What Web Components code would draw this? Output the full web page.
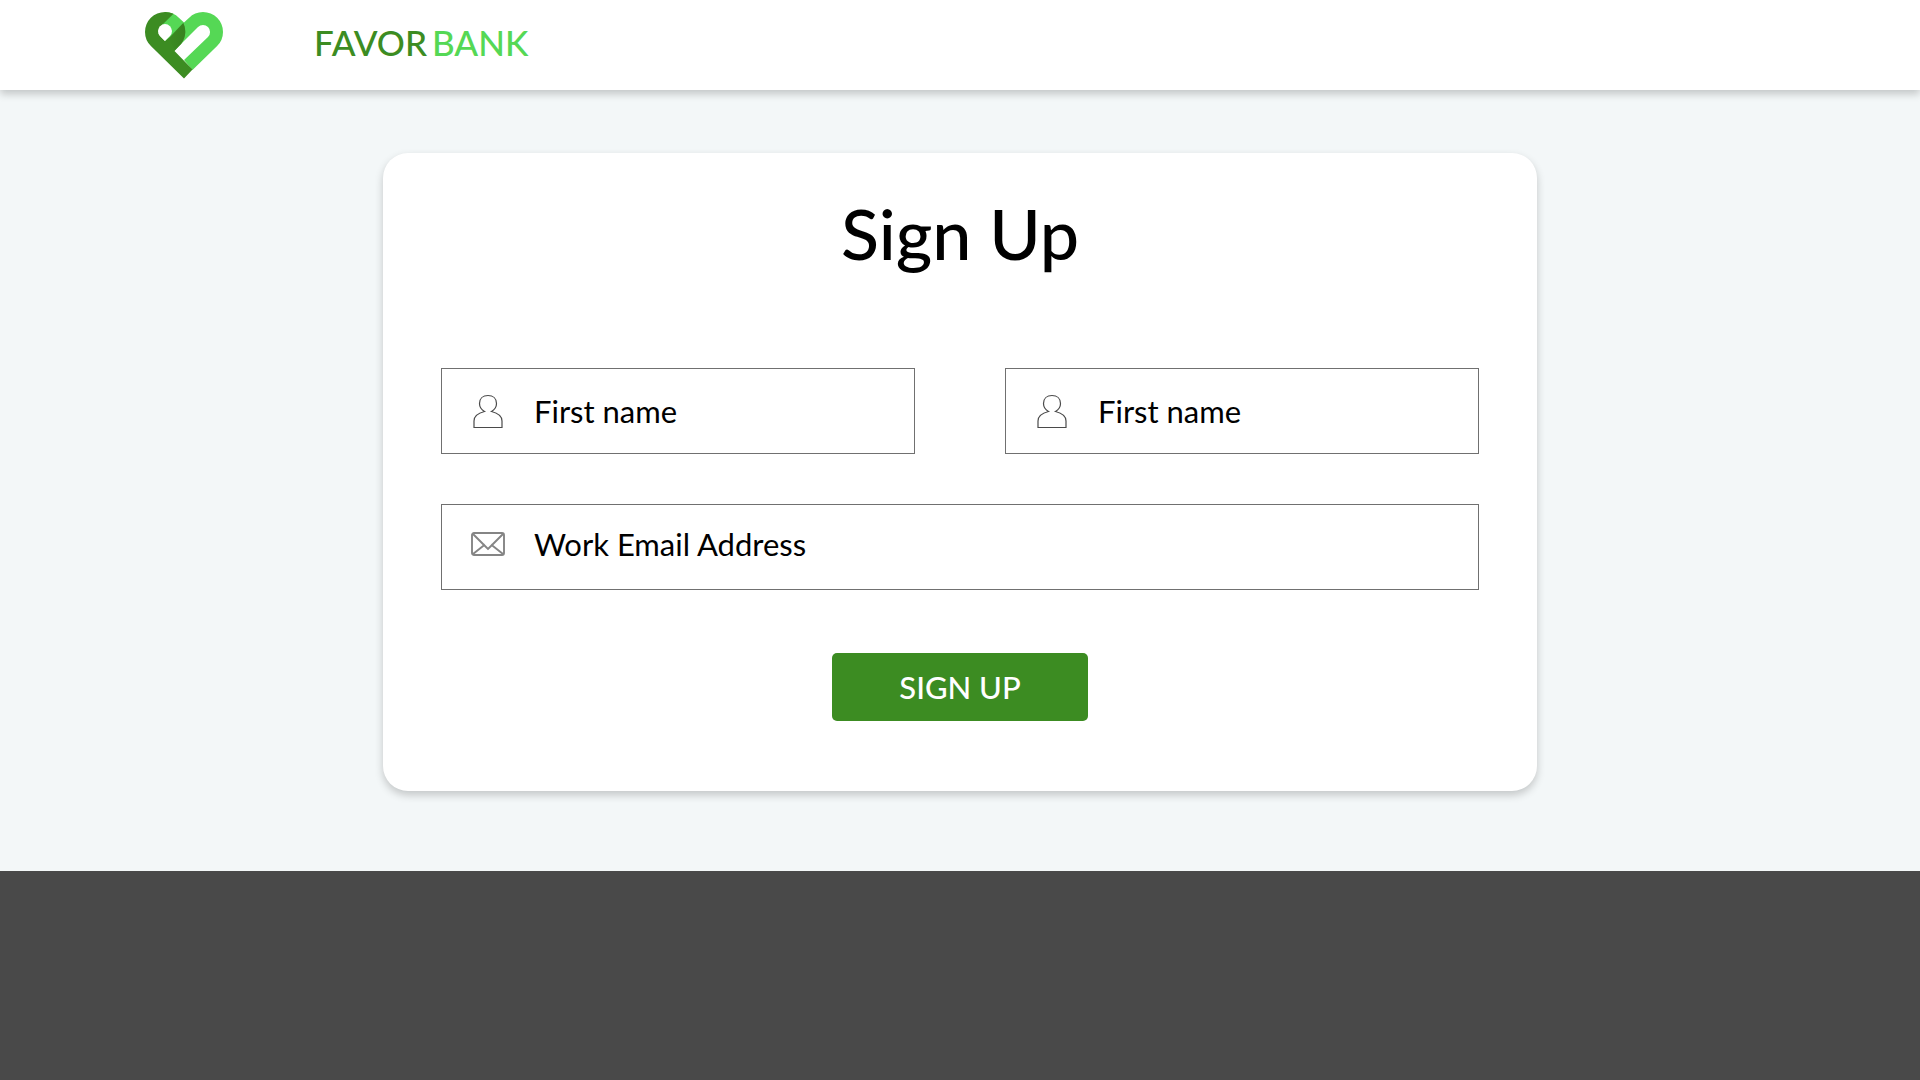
<!DOCTYPE html>
<html lang="en">
<head>
<meta charset="utf-8">
<title>Favor Bank – Sign Up</title>
<style>
  html, body { margin: 0; height: 100%; }
  body {
    --green-dark: #3c8c22;
    --green-light: #55d855;
    --line: #707070;
    --shadow: 0 4px 8px rgba(0, 0, 0, .2);
    font-family: Lato, "Liberation Sans", sans-serif;
    color: #000;
    background: #f3f7f8;
  }
</style>
</head>
<body>
<signup-page></signup-page>

<script>
class Base extends HTMLElement {
  constructor() {
    super();
    this.attachShadow({ mode: 'open' }).innerHTML = this.render();
  }
}

customElements.define('bank-logo', class extends Base {
  render() {
    return `
      <style>
        :host { display: block; width: 78px; height: 67px; flex: none; }
        svg { display: block; }
        .dark { fill: var(--green-dark); }
        .light { fill: var(--green-light); }
      </style>
      <svg width="78" height="67" viewBox="15 12 78 67" aria-hidden="true">
        <defs>
          <linearGradient id="fold" x1="0" y1="0" x2="1" y2="0">
            <stop offset="0" stop-color="#32781d" stop-opacity="0"/>
            <stop offset="1" stop-color="#32781d" stop-opacity=".5"/>
          </linearGradient>
        </defs>
        <path class="light" d="M35 12A20 20 0 0 1 49.100 17.900L54 22.500L58.900 17.900A20 20 0 0 1 73 12A20 20 0 0 1 93 32A20 20 0 0 1 87.100 46.100L62.500 70L54 60L78 37A7 7 0 0 0 68 27L44 51L28 32Z"/>
        <path class="dark" d="M43.500 13.800A20 20 0 0 0 35 12A20 20 0 0 0 15 32A20 20 0 0 0 20.900 46.100L54 78.500L62.500 69.500L44.500 51L49.100 46.100A20 20 0 0 0 53.300 23L40 37L35 41L30 36A7 7 0 0 1 30 27Z"/>
        <path fill="url(#fold)" d="M53.300 23A20 20 0 0 1 49.100 46.100L45 50L38 38Z"/>
        <path fill="#fff" d="M30 36A7 7 0 1 1 40 36L35 41Z"/>
      </svg>`;
  }
});

customElements.define('site-header', class extends Base {
  render() {
    return `
      <style>
        :host {
          display: flex; align-items: center; gap: 91px;
          box-sizing: border-box; height: 90px; padding: 0 145px;
          background: #fff; position: relative;
          box-shadow: var(--shadow);
        }
        .name { display: flex; gap: 5px; font-size: 35px; font-weight: 500; line-height: 42px; padding-bottom: 6px; }
        .favor { color: var(--green-dark); }
        .bank { color: var(--green-light); }
      </style>
      <bank-logo></bank-logo>
      <div class="name"><span class="favor">FAVOR</span><span class="bank">BANK</span></div>`;
  }
});

customElements.define('user-icon', class extends Base {
  render() {
    return `
      <style>:host, svg { display: block; }</style>
      <svg width="34" height="36" viewBox="0 0 34 36" fill="none" stroke="#4a4a4a" stroke-width="1.200" aria-hidden="true">
        <path d="M13.500 18.500C10 16.500 8.500 13.500 8.500 10.500C8.500 5.500 12 2.500 17 2.500C22 2.500 25.500 5.500 25.500 10.500C25.500 13.500 24 16.500 20.500 18.500C26.500 20 31 23.500 31 28V34.500H3V28C3 23.500 7.500 20 13.500 18.500Z"/>
      </svg>`;
  }
});

customElements.define('mail-icon', class extends Base {
  render() {
    return `
      <style>:host, svg { display: block; }</style>
      <svg width="34" height="24" viewBox="0 0 34 24" fill="none" stroke="#858585" stroke-width="1.900" aria-hidden="true">
        <rect x="1" y="1" width="32" height="22" rx="2"/>
        <path d="M2 2L14 14L17 17L20 14L32 2M2 22L14 12.500M32 22L20 12.500"/>
      </svg>`;
  }
});

customElements.define('text-field', class extends HTMLElement {
  connectedCallback() {
    const root = this.attachShadow({ mode: 'open' });
    root.innerHTML = `
      <style>
        :host { display: block; flex: 1; min-width: 0; }
        label {
          display: flex; align-items: center; gap: 29px;
          box-sizing: border-box; height: 86px; padding: 0 29px;
          border: 1px solid var(--line); background: #fff;
        }
        :host([raised]) label { padding-bottom: 6px; }
        input {
          flex: 1; min-width: 0; padding: 0; border: 0; outline: 0; background: none;
          font: inherit; font-size: 31px; line-height: 40px; height: 40px; color: inherit;
        }
        input::placeholder { color: #000; opacity: 1; }
      </style>
      <label><slot name="icon"></slot><input></label>`;
    const input = root.querySelector('input');
    input.type = this.getAttribute('type') || 'text';
    input.placeholder = this.getAttribute('label');
    input.setAttribute('aria-label', this.getAttribute('label'));
  }
});

customElements.define('primary-button', class extends Base {
  render() {
    return `
      <style>
        :host { display: block; }
        button {
          display: block; width: 256px; height: 68px; padding: 0;
          border: 0; border-radius: 5px; background: var(--green-dark);
          color: #fff; font: inherit; font-size: 31px; font-weight: 500; line-height: 40px; cursor: pointer;
        }
      </style>
      <button type="button"><slot></slot></button>`;
  }
});

customElements.define('signup-card', class extends Base {
  render() {
    return `
      <style>
        :host {
          display: block; box-sizing: border-box; width: 100%; max-width: 1154px;
          padding: 38px 58px 70px; border-radius: 25px; background: #fff;
          box-shadow: var(--shadow);
        }
        h1 { margin: 0 0 93px; font-weight: 500; font-size: 70px; line-height: 84px; text-align: center; }
        form { display: flex; flex-direction: column; }
        .row { display: flex; gap: 90px; margin-bottom: 50px; }
        primary-button { align-self: center; margin-top: 13px; }
      </style>
      <h1>Sign Up</h1>
      <form>
        <div class="row">
          <text-field label="First name"><user-icon slot="icon"></user-icon></text-field>
          <text-field label="First name"><user-icon slot="icon"></user-icon></text-field>
        </div>
        <div class="row">
          <text-field label="Work Email Address" type="email" raised><mail-icon slot="icon"></mail-icon></text-field>
        </div>
        <primary-button>SIGN UP</primary-button>
      </form>`;
  }
});

customElements.define('site-footer', class extends Base {
  render() {
    return `<style>:host { display: block; flex: 1; background: #494949; }</style>`;
  }
});

customElements.define('signup-page', class extends Base {
  render() {
    return `
      <style>
        :host { display: flex; flex-direction: column; min-height: 100vh; }
        main { display: flex; justify-content: center; padding: 63px 24px 80px; }
      </style>
      <site-header></site-header>
      <main><signup-card></signup-card></main>
      <site-footer></site-footer>`;
  }
});
</script>
</body>
</html>
